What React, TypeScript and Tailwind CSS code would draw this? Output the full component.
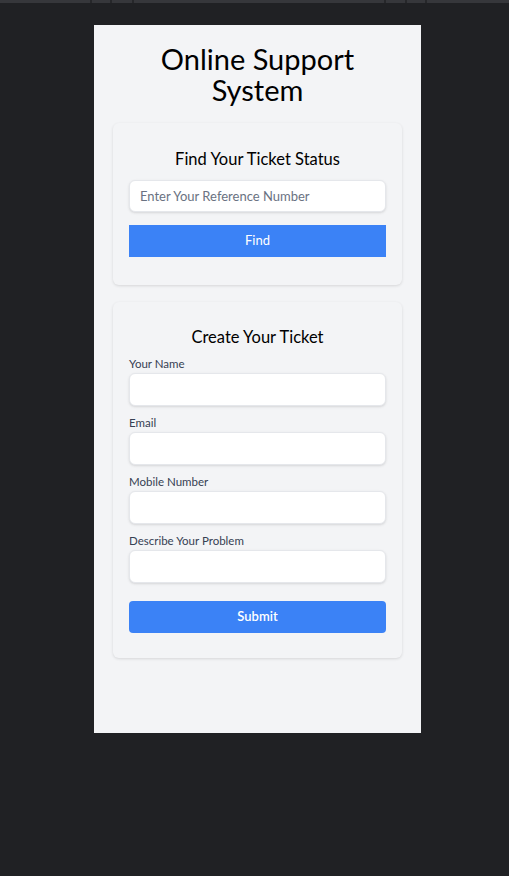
import React from "react";

const fields = ["Your Name", "Email", "Mobile Number", "Describe Your Problem"];

function TopRuler() {
  return (
    <div className="flex h-[3px] w-full bg-[#36373b]">
      <span className="ml-[90px] h-[3px] w-[2px] bg-[#26272a]" />
      <span className="ml-[18px] h-[3px] w-[2px] bg-[#26272a]" />
      <span className="ml-[20px] h-[3px] w-[2px] bg-[#26272a]" />
      <span className="ml-[250px] h-[3px] w-[2px] bg-[#26272a]" />
      <span className="ml-[19px] h-[3px] w-[2px] bg-[#26272a]" />
      <span className="ml-[18px] h-[3px] w-[2px] bg-[#26272a]" />
    </div>
  );
}

export default function App() {
  return (
    <div
      className="min-h-[876px] w-full bg-[#202124]"
      style={{ fontFamily: "Lato, 'Noto Sans', sans-serif" }}
    >
      <TopRuler />
      <div className="pt-[22px]">
        <div className="ml-[94px] flex h-[708px] w-[327px] flex-col bg-[#f3f4f6] px-[19px] pt-[18px]">
          <h1 className="text-center text-[29px] leading-[31px] text-black">
            Online Support
            <br />
            System
          </h1>

          <section className="mt-[18px] rounded-md bg-[#f3f4f6] px-4 pb-[28px] pt-[22px] shadow-[0_1px_3px_rgba(0,0,0,0.12)]">
            <h2 className="text-center text-[16.5px] leading-7 text-black">
              Find Your Ticket Status
            </h2>
            <input
              className="mt-[7px] block h-8 w-full rounded-md border border-gray-200 bg-white px-[10px] text-[13px] text-gray-700 shadow-sm outline-none placeholder:text-gray-500"
              placeholder="Enter Your Reference Number"
            />
            <button className="mt-[13px] block h-8 w-full bg-[#3b82f6] text-[13px] text-white">
              Find
            </button>
          </section>

          <section className="mt-[17px] rounded-md bg-[#f3f4f6] px-4 pb-[25px] pt-[21px] shadow-[0_1px_3px_rgba(0,0,0,0.12)]">
            <h2 className="text-center text-[16.5px] leading-7 text-black">
              Create Your Ticket
            </h2>
            <div className="mt-[5px] flex flex-col gap-[9px]">
              {fields.map((label) => (
                <label key={label} className="flex flex-col gap-px">
                  <span className="text-[11.5px] leading-4 text-gray-700">{label}</span>
                  <input className="block h-[33px] w-full rounded-md border border-gray-200 bg-white px-[10px] text-sm shadow-sm outline-none" />
                </label>
              ))}
            </div>
            <button className="mt-[18px] block h-8 w-full rounded bg-[#3b82f6] text-[13px] font-semibold text-white">
              Submit
            </button>
          </section>
        </div>
      </div>
    </div>
  );
}
